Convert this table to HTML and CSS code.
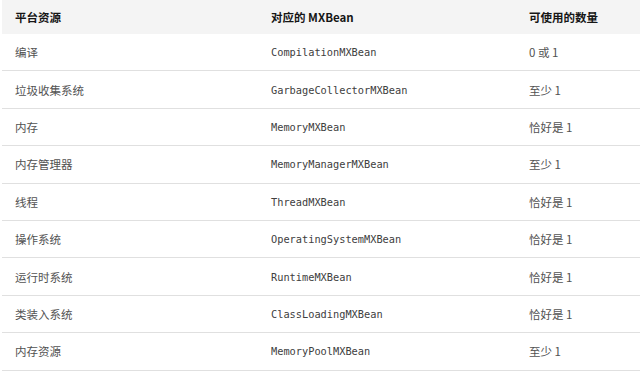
FILE: index.html
```html
<!DOCTYPE html>
<html lang="zh">
<head>
<meta charset="utf-8">
<link rel="stylesheet" href="styles.css">
</head>
<body>
<table class="tbl">
  <thead>
    <tr><th class="c1">平台资源</th><th class="c2">对应的 MXBean</th><th class="c3">可使用的数量</th></tr>
  </thead>
  <tbody>
    <tr><td>编译</td><td class="mono">CompilationMXBean</td><td>0 或 1</td></tr>
    <tr><td>垃圾收集系统</td><td class="mono">GarbageCollectorMXBean</td><td>至少 1</td></tr>
    <tr><td>内存</td><td class="mono">MemoryMXBean</td><td>恰好是 1</td></tr>
    <tr><td>内存管理器</td><td class="mono">MemoryManagerMXBean</td><td>至少 1</td></tr>
    <tr><td>线程</td><td class="mono">ThreadMXBean</td><td>恰好是 1</td></tr>
    <tr><td>操作系统</td><td class="mono">OperatingSystemMXBean</td><td>恰好是 1</td></tr>
    <tr><td>运行时系统</td><td class="mono">RuntimeMXBean</td><td>恰好是 1</td></tr>
    <tr><td>类装入系统</td><td class="mono">ClassLoadingMXBean</td><td>恰好是 1</td></tr>
    <tr><td>内存资源</td><td class="mono">MemoryPoolMXBean</td><td>至少 1</td></tr>
  </tbody>
</table>
</body>
</html>
```
FILE: styles.css
```css
html, body {
  margin: 0;
  padding: 0;
  background: #ffffff;
}
body {
  padding-left: 2px;
  font-family: "Noto Sans CJK SC", "Noto Sans", sans-serif;
}
.tbl {
  width: 638px;
  border-collapse: collapse;
  table-layout: fixed;
}
.tbl th {
  background: #f4f4f4;
  height: 34px;
  padding: 0 0 0 13px;
  text-align: left;
  font-size: 11.5px;
  font-weight: 700;
  color: #161616;
}
.tbl .c1 { width: 243px; }
.tbl .c2 { width: 245px; }
.tbl td {
  height: 36.4px;
  padding: 0 0 0 13px;
  border-bottom: 1px solid #e0e0e0;
  font-size: 11.5px;
  color: #525252;
}
.tbl td.mono {
  font-family: "DejaVu Sans Mono", "Liberation Mono", monospace;
  font-size: 10.3px;
  color: #404040;
}
```
